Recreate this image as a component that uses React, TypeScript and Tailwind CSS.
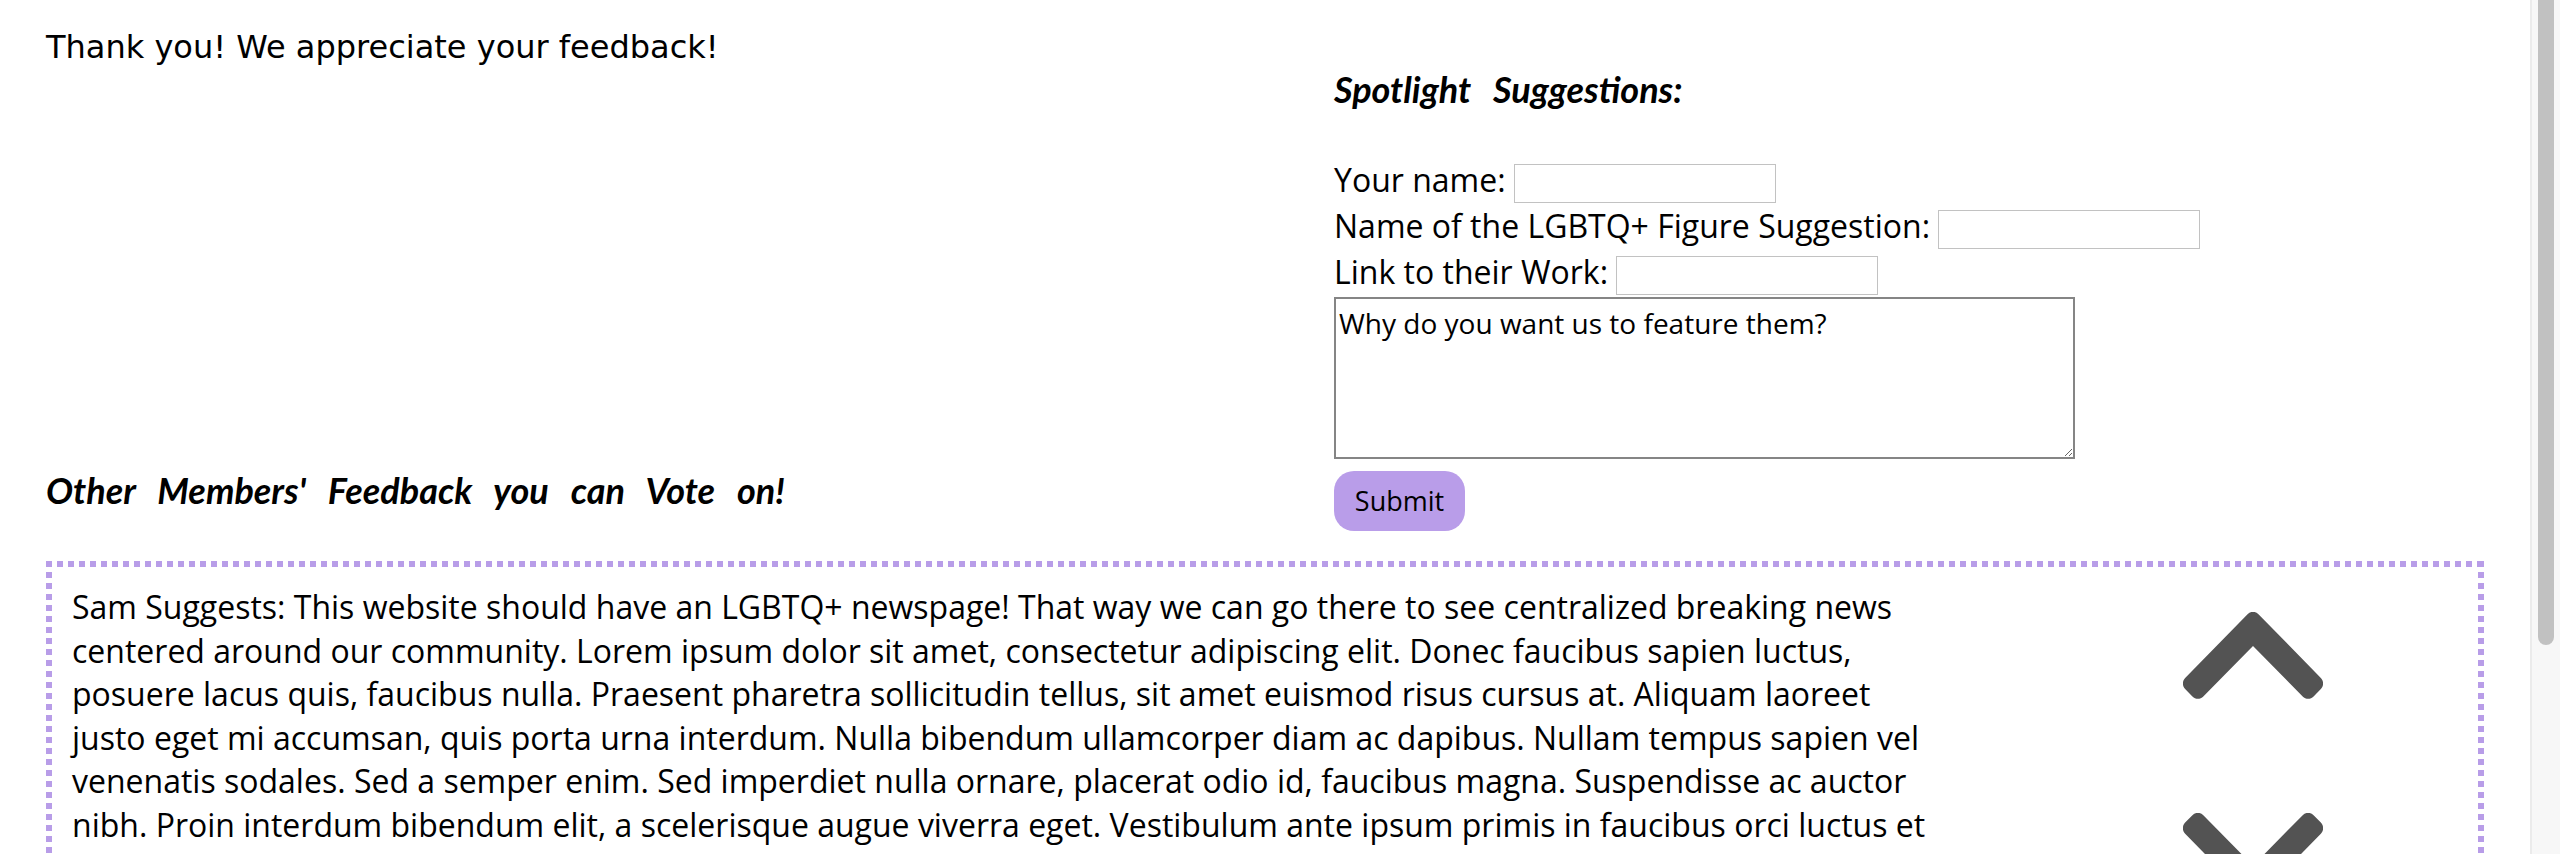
import { FaChevronUp, FaChevronDown } from "react-icons/fa";

const feedback =
  "This website should have an LGBTQ+ newspage! That way we can go there to see centralized breaking news centered around our community. Lorem ipsum dolor sit amet, consectetur adipiscing elit. Donec faucibus sapien luctus, posuere lacus quis, faucibus nulla. Praesent pharetra sollicitudin tellus, sit amet euismod risus cursus at. Aliquam laoreet justo eget mi accumsan, quis porta urna interdum. Nulla bibendum ullamcorper diam ac dapibus. Nullam tempus sapien vel venenatis sodales. Sed a semper enim. Sed imperdiet nulla ornare, placerat odio id, faucibus magna. Suspendisse ac auctor nibh. Proin interdum bibendum elit, a scelerisque augue viverra eget. Vestibulum ante ipsum primis in faucibus orci luctus et ultrices posuere cubilia curae; Integer vitae erat at lorem tristique fermentum.";

function Field({ label }: { label: string }) {
  return (
    <div className="flex items-start h-[46px]">
      <span className="leading-[44px] whitespace-pre">{label} </span>
      <input className="mt-[6px] h-[39px] w-[262px] border border-[#c2c2c2] bg-white outline-none" />
    </div>
  );
}

export default function App() {
  return (
    <div className="flex h-[854px] w-[2560px] overflow-hidden bg-white text-black font-['Open_Sans',sans-serif] text-[32px]">
      <main className="w-[2530px] h-[854px] overflow-hidden">
        <div className="flex items-stretch">
          {/* left column */}
          <div className="w-[1334px] pl-[46px] pt-[28px] pb-[20px] flex flex-col justify-between">
            <p className="font-['Verdana','DejaVu_Sans',sans-serif] text-[32px] leading-[38px]">
              Thank you! We appreciate your feedback!
            </p>
            <h3 className="font-['Lato',sans-serif] font-bold italic text-[36px] leading-[42px] [word-spacing:14px]">
              Other Members' Feedback you can Vote on!
            </h3>
          </div>

          {/* suggestion form */}
          <form className="pt-[68px] flex flex-col items-start">
            <h3 className="font-['Lato',sans-serif] font-bold italic text-[36px] leading-[42px] [word-spacing:14px] mb-[48px]">
              Spotlight Suggestions:
            </h3>
            <Field label="Your name:" />
            <Field label="Name of the LGBTQ+ Figure Suggestion:" />
            <Field label="Link to their Work:" />
            <textarea
              className="mt-[1px] w-[741px] h-[162px] border-2 border-[#858585] px-[3px] pt-[5px] text-[28px] leading-[38px] font-['Open_Sans',sans-serif] outline-none"
              defaultValue="Why do you want us to feature them?"
            />
            <button
              type="button"
              className="mt-[12px] w-[131px] h-[60px] rounded-[20px] bg-[#b99de9] text-[27px] text-black"
            >
              Submit
            </button>
          </form>
        </div>

        {/* feedback card with square-dotted border */}
        <div className="ml-[46px] mt-[30px] w-[2438px] pl-[26px] pt-[24px] pr-[6px] flex items-start [background-image:linear-gradient(to_right,#b89de8_6px,transparent_6px),linear-gradient(to_bottom,#b89de8_6px,transparent_6px),linear-gradient(to_bottom,#b89de8_6px,transparent_6px)] [background-size:11px_6px,6px_11px,6px_11px] [background-position:left_top,left_top,right_top] [background-repeat:repeat-x,repeat-y,repeat-y]">
          <p className="w-[1860px] leading-[43.6px]">
            Sam Suggests: {feedback}
          </p>
          <div className="ml-[251px] mt-[27px] flex flex-col items-center gap-[114px] text-[#535353]">
            <FaChevronUp className="w-[140px] h-[87px]" preserveAspectRatio="none" viewBox="6 124 436 265" />
            <FaChevronDown className="w-[140px] h-[87px]" preserveAspectRatio="none" viewBox="6 124 436 265" />
          </div>
        </div>
      </main>

      {/* browser scrollbar */}
      <aside className="w-[30px] h-[854px] bg-[#f7f7f7] border-l-2 border-[#ebebeb]">
        <div className="ml-[6px] w-[16px] h-[645px] rounded-b-full bg-[#c1c1c1]" />
      </aside>
    </div>
  );
}
